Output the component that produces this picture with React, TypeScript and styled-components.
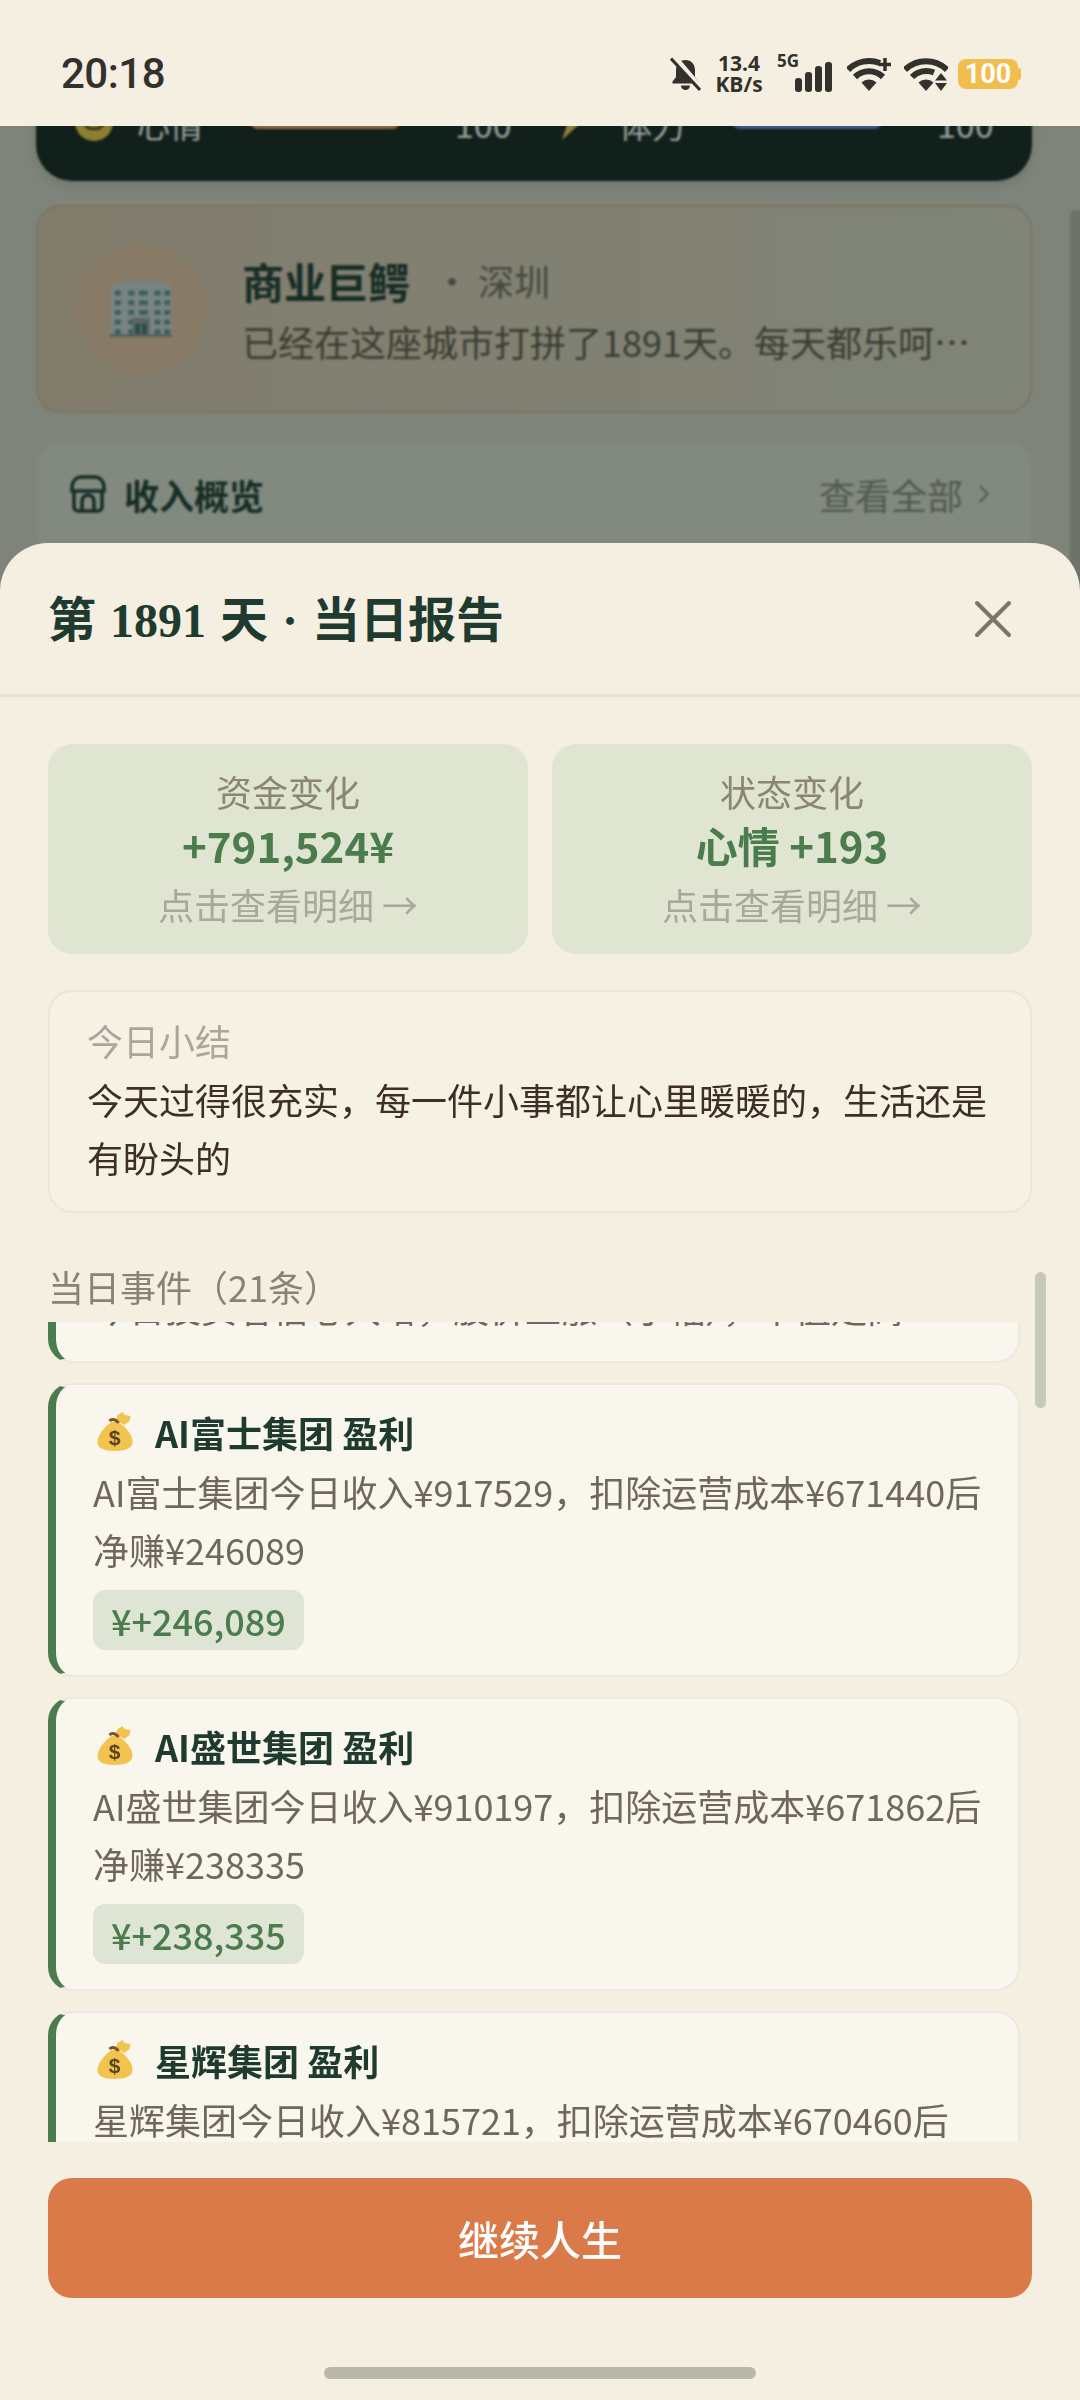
import React, { useLayoutEffect, useRef } from "react";
import styled, { createGlobalStyle } from "styled-components";
import { X, ChevronRight } from "lucide-react";

const SANS = `"Noto Sans CJK SC", "Noto Sans", sans-serif`;

const GlobalStyle = createGlobalStyle`
  html, body {
    margin: 0;
    padding: 0;
    background: #f5efe2;
  }
  * {
    box-sizing: border-box;
  }
`;

const Screen = styled.div`
  position: relative;
  width: 1080px;
  height: 2400px;
  overflow: hidden;
  background: #d7d0c5;
  font-family: ${SANS};
`;

/* ---------- status bar ---------- */

const StatusBar = styled.header`
  position: absolute;
  top: 0;
  left: 0;
  right: 0;
  z-index: 3;
  display: flex;
  justify-content: space-between;
  align-items: center;
  height: 126px;
  padding: 21px 60px 0 61px;
  background: #f5efe2;
  color: #33312c;
`;

const Clock = styled.div`
  font-family: Roboto, sans-serif;
  font-size: 42px;
  font-weight: 500;
  letter-spacing: -0.5px;
`;

const StatusIcons = styled.div`
  display: flex;
  align-items: center;
`;

const NetSpeed = styled.div`
  display: flex;
  flex-direction: column;
  align-items: center;
  width: 46px;
  margin: 0 15px 0 15px;
  font-family: "Open Sans", sans-serif;
  font-size: 21px;
  font-weight: 700;
  line-height: 21px;
`;

const SignalWrap = styled.div`
  position: relative;
  display: flex;
  justify-content: flex-end;
  align-items: flex-end;
  gap: 3px;
  width: 55px;
  height: 37px;
  margin-right: 15px;
`;

const FiveG = styled.span`
  position: absolute;
  top: -3px;
  left: 0;
  font-family: "Open Sans", sans-serif;
  font-size: 17px;
  font-weight: 700;
  line-height: 18px;
`;

const SignalBar = styled.i<{ $h: number }>`
  display: block;
  width: 7px;
  height: ${(p) => p.$h}px;
  border-radius: 3px;
  background: #33312c;
`;

const WifiGap = styled.span`
  width: 13px;
`;

const Battery = styled.div`
  position: relative;
  width: 60px;
  height: 30px;
  margin-left: 10px;
  margin-right: 2px;
  border-radius: 8px;
  background: #f2bd4f;
  color: #fff;
  font-family: Roboto, sans-serif;
  font-size: 27px;
  font-weight: 700;
  line-height: 30px;
  text-align: center;

  &::after {
    content: "";
    position: absolute;
    top: 9px;
    right: -3px;
    width: 3px;
    height: 12px;
    border-radius: 0 2px 2px 0;
    background: #f2bd4f;
  }
`;

/* ---------- page behind the sheet ---------- */

const Behind = styled.main`
  display: flex;
  flex-direction: column;
  gap: 24px;
  width: 100%;
  padding: 56px 48px 0 36px;
`;

const PageThumb = styled.div`
  position: absolute;
  top: 210px;
  right: 0;
  width: 10px;
  height: 400px;
  border-radius: 5px 0 0 5px;
  background: #b8afa6;
`;

const PlayerCard = styled.section`
  display: flex;
  align-items: center;
  height: 125px;
  padding: 27px 35px 16px 39px;
  border-radius: 36px;
  background: #121a18;
  box-shadow: 0 4px 12px rgba(0, 0, 0, 0.12);
  color: #fff;
`;

const MeterIcon = styled.span<{ $wide: number; $before: number; $after: number }>`
  display: flex;
  flex: none;
  width: ${(p) => p.$wide}px;
  margin: -4px ${(p) => p.$after}px 0 ${(p) => p.$before}px;
`;

const MeterLabel = styled.span`
  flex: none;
  width: 66px;
  font-size: 33px;
  line-height: 40px;
`;

const MeterTrack = styled.div<{ $color: string }>`
  flex: none;
  width: 150px;
  height: 26px;
  margin: -16px 0 0 47px;
  border-radius: 8px;
  background: ${(p) => p.$color};
`;

const MeterValue = styled.span`
  flex: none;
  width: 58px;
  margin-left: 55px;
  font-size: 34px;
  line-height: 40px;
`;

const ProfileCard = styled.section`
  display: flex;
  align-items: center;
  gap: 35px;
  height: 208px;
  padding: 0 38px 0 37px;
  border: 2px solid #d2b399;
  border-radius: 24px;
  background: linear-gradient(90deg, #dcc2ad, #d9d2c2);
`;

const Avatar = styled.div`
  display: flex;
  flex: none;
  justify-content: center;
  align-items: center;
  width: 132px;
  height: 132px;
  border-radius: 50%;
  background: #e6c0a4;
`;

const ProfileText = styled.div`
  flex: 1;
  min-width: 0;
  padding-right: 8px;
`;

const ProfileTop = styled.div`
  display: flex;
  align-items: center;
  height: 64px;
  padding-top: 2px;
`;

const ProfileName = styled.strong`
  font-size: 42px;
  font-weight: 700;
  color: #1a332b;
`;

const ProfileCity = styled.span`
  margin-left: 24px;
  font-size: 36px;
  color: #6f6558;
`;

const ProfileBio = styled.p`
  margin: 0;
  overflow: hidden;
  font-size: 36px;
  line-height: 60px;
  color: #5c4f3f;
  white-space: nowrap;
  text-overflow: ellipsis;
`;

const IncomeCard = styled.section`
  height: 300px;
  margin-top: 4px;
  padding: 21px 31px 0 32px;
  border: 2px solid #d5d2c7;
  border-radius: 24px;
  background: #dcd9ce;
`;

const IncomeHead = styled.div`
  display: flex;
  justify-content: space-between;
  align-items: center;
  height: 60px;
`;

const IncomeTitle = styled.div`
  display: flex;
  align-items: center;
  gap: 18px;
  font-size: 35px;
  font-weight: 700;
  color: #1a332b;
`;

const SeeAll = styled.div`
  display: flex;
  align-items: center;
  gap: 6px;
  font-size: 36px;
  color: #84847a;
`;

const Scrim = styled.div`
  position: absolute;
  inset: 0;
  z-index: 1;
  background: rgba(20, 40, 30, 0.45);
  backdrop-filter: blur(1px);
`;

/* ---------- bottom sheet ---------- */

const Sheet = styled.section`
  position: absolute;
  top: 543px;
  left: 0;
  right: 0;
  bottom: 0;
  z-index: 2;
  display: flex;
  flex-direction: column;
  border-radius: 48px 48px 0 0;
  background: #f5efe2;
`;

const SheetHead = styled.div`
  display: flex;
  flex: none;
  justify-content: space-between;
  align-items: center;
  height: 154px;
  padding: 0 55px 0 48px;
  border-bottom: 3px solid #e9e2d4;
`;

const SheetTitle = styled.h2`
  margin: 0 0 5px;
  font-family: "Liberation Serif", "Noto Sans CJK SC", serif;
  font-size: 48px;
  font-weight: 700;
  word-spacing: 2px;
  color: #1f3a2e;
`;

const CloseButton = styled.button`
  display: flex;
  padding: 0;
  border: 0;
  background: none;
  color: #7d7568;
`;

const SheetBody = styled.div`
  display: flex;
  flex: 1;
  flex-direction: column;
  min-height: 0;
  padding: 47px 48px 0;
`;

const StatGrid = styled.div`
  display: grid;
  flex: none;
  grid-template-columns: 480px 480px;
  gap: 24px;
`;

const StatCard = styled.div`
  display: flex;
  flex-direction: column;
  align-items: center;
  height: 210px;
  padding-top: 20px;
  border-radius: 24px;
  background: #e0e5d1;
`;

const StatLabel = styled.div`
  font-size: 36px;
  line-height: 54px;
  color: #8a8574;
`;

const StatValue = styled.div`
  font-size: 42px;
  font-weight: 700;
  line-height: 54px;
  color: #4a7c4e;
`;

const StatHint = styled.div`
  margin-top: 2px;
  font-size: 36px;
  line-height: 60px;
  color: #a8a798;
`;

const SummaryBox = styled.div`
  flex: none;
  height: 223px;
  margin-top: 36px;
  padding: 20px 37px 0;
  border: 2px solid #ece6d8;
  border-radius: 24px;
  background: #f6f1e5;
`;

const SummaryLabel = styled.div`
  font-size: 36px;
  line-height: 56px;
  color: #aba59a;
`;

const SummaryText = styled.p`
  margin: 2px 0 0;
  font-size: 36px;
  line-height: 58px;
  color: #3d2f22;
`;

const EventSection = styled.div`
  position: relative;
  display: flex;
  flex: 1;
  flex-direction: column;
  min-height: 0;
  margin-top: 44px;
`;

const EventHeading = styled.div`
  flex: none;
  height: 65px;
  font-size: 36px;
  line-height: 58px;
  color: #8a8272;
`;

const EventList = styled.div`
  display: flex;
  flex: 1;
  flex-direction: column;
  gap: 20px;
  width: 972px;
  min-height: 0;
  overflow: hidden;
`;

const ListThumb = styled.div`
  position: absolute;
  top: 15px;
  right: -14px;
  width: 11px;
  height: 136px;
  border-radius: 6px;
  background: #c6c8b9;
`;

const EventCard = styled.article`
  flex: none;
  padding: 24px 36px 25px 37px;
  border: 2px solid #ece8e1;
  border-left: 8px solid #4a7c4e;
  border-radius: 24px;
  background: #f9f6ee;
`;

const EventTitle = styled.div`
  display: flex;
  align-items: center;
  gap: 21px;
  padding-left: 3px;
  font-size: 36px;
  font-weight: 700;
  line-height: 46px;
  color: #1f3a2e;
`;

const EventDesc = styled.p`
  margin: 7px 0 0;
  font-size: 36px;
  line-height: 58px;
  color: #6f675c;
`;

const MoneyTag = styled.span`
  display: inline-block;
  height: 60px;
  margin-top: 12px;
  padding: 0 18px;
  border-radius: 12px;
  background: #dfe5d5;
  font-size: 36px;
  font-weight: 500;
  line-height: 60px;
  color: #4a7c4e;
`;

const SheetFoot = styled.div`
  display: flex;
  flex: none;
  flex-direction: column;
  align-items: center;
  padding: 36px 48px 21px;
`;

const ContinueButton = styled.button`
  width: 984px;
  height: 120px;
  border: 0;
  border-radius: 24px;
  background: #d97a48;
  font-family: ${SANS};
  font-size: 41px;
  font-weight: 500;
  color: #fff;
`;

const HomeIndicator = styled.div`
  width: 432px;
  height: 12px;
  margin-top: 69px;
  border-radius: 6px;
  background: #b8b7a9;
`;

/* ---------- drawn icons ---------- */

function BellOff() {
  return (
    <svg width="31" height="34" viewBox="0 0 31 34">
      <path
        d="M15.500 3c-6 0-9.500 4.500-9.500 10.500v6.500l-3.500 4.500v2h26v-2L25 20v-6.500C25 7.500 21.500 3 15.500 3z"
        fill="#33312c"
      />
      <path d="M11 28.500a4.500 4.500 0 0 0 9 0z" fill="#33312c" />
      <path d="M4 0l27 32" stroke="#f5efe2" strokeWidth="6" />
      <path d="M1 1.500l29 31.500" stroke="#33312c" strokeWidth="3" />
    </svg>
  );
}

function WifiIcon({ badge }: { badge: "plus" | "arrows" }) {
  return (
    <svg width="44" height="34" viewBox="0 0 44 34" fill="none">
      <g stroke="#33312c" strokeWidth="6">
        <path d={badge === "plus" ? "M1 12.800A30 30 0 0 1 33 6" : "M1 12.800A30 30 0 0 1 43 12.800"} />
        <path d={badge === "plus" ? "M8 20A20 20 0 0 1 36 20" : "M8 20A20 20 0 0 1 30 15.500"} />
      </g>
      <path d="M14.500 25.500a11 11 0 0 1 15 0L22 34z" fill="#33312c" />
      {badge === "plus" ? (
        <path d="M38 1v13M31.500 7.500h12.500" stroke="#33312c" strokeWidth="3.500" />
      ) : (
        <path d="M37 16l6 7.500H31zM31 26h12l-6 8z" fill="#33312c" />
      )}
    </svg>
  );
}

function SmileIcon() {
  return (
    <svg width="38" height="38" viewBox="0 0 38 38">
      <circle cx="19" cy="19" r="19" fill="#f0c63c" />
      <path d="M9 20c3 8 17 8 20 0" stroke="#4c3b14" strokeWidth="2.500" fill="none" />
    </svg>
  );
}

function BoltIcon() {
  return (
    <svg width="24" height="38" viewBox="0 0 24 36">
      <path d="M24 0L10 14h14L0 36l6-18H0z" fill="#eccb4a" />
    </svg>
  );
}

function BuildingIcon() {
  const cols = [5, 19, 30, 46, 56];
  const rows = [10, 20, 30, 40, 50];
  return (
    <svg width="62" height="58" viewBox="0 0 64 58">
      <rect x="12" y="0" width="40" height="4" fill="#c9cdd0" />
      <rect x="1" y="4" width="62" height="52" fill="#c9d0d2" />
      {rows.map((y) =>
        cols.map((x) => (
          <rect key={`${x}-${y}`} x={x} y={y} width={x === 30 ? 9 : 6} height="5" fill="#5d8a96" />
        ))
      )}
      <rect x="23" y="38" width="18" height="18" fill="#9a9a92" />
      <rect x="26" y="44" width="5" height="12" fill="#3f6a78" />
      <rect x="33" y="44" width="5" height="12" fill="#3f6a78" />
      <rect x="0" y="55" width="64" height="3" fill="#8f918c" />
    </svg>
  );
}

function StoreIcon() {
  return (
    <svg width="36" height="38" viewBox="0 0 36 38" fill="none" stroke="#1a332b" strokeWidth="3.500">
      <path d="M2 13C2 6 6 2 12 2h12c6 0 10 4 10 11v3H2z" />
      <path d="M4 16v16a4 4 0 0 0 4 4h20a4 4 0 0 0 4-4V16" />
      <path d="M12 36V26a6 6 0 0 1 12 0v10" />
    </svg>
  );
}

function MoneyBag() {
  return (
    <svg width="38" height="40" viewBox="0 0 37 40">
      <path
        d="M15 10C8 15 1 23 1 30c0 6 6 9 17 9s18-3 18-9c0-8-7-15-14-20z"
        fill="#f2c34f"
      />
      <path d="M21 3l5-3 2 3 6 1-1 5-5 4-5-3-4-1z" fill="#f2c34f" />
      <path d="M13 9c3-3 7-1 9 2" stroke="#7a5526" strokeWidth="3" fill="none" />
      <text
        x="18"
        y="33"
        textAnchor="middle"
        fontFamily="Liberation Sans"
        fontSize="21"
        fontWeight="700"
        fill="#5a4420"
      >
        $
      </text>
    </svg>
  );
}

const EVENTS = [
  { title: "AI富士集团 盈利", desc: "AI富士集团今日收入¥917529，扣除运营成本¥671440后净赚¥246089", money: "¥+246,089" },
  { title: "AI盛世集团 盈利", desc: "AI盛世集团今日收入¥910197，扣除运营成本¥671862后净赚¥238335", money: "¥+238,335" },
  { title: "星辉集团 盈利", desc: "星辉集团今日收入¥815721，扣除运营成本¥670460后净赚¥145261", money: "¥+145,261" },
];

export default function App() {
  const listRef = useRef<HTMLDivElement>(null);

  // the list in the reference is caught part way through its scroll
  useLayoutEffect(() => {
    if (listRef.current) listRef.current.scrollTop = 123;
  }, []);

  return (
    <Screen>
      <GlobalStyle />

      <Behind>
        <PlayerCard>
          <MeterIcon $wide={38} $before={0} $after={24}>
            <SmileIcon />
          </MeterIcon>
          <MeterLabel>心情</MeterLabel>
          <MeterTrack $color="#f39a5e" />
          <MeterValue>100</MeterValue>
          <MeterIcon $wide={24} $before={49} $after={33}>
            <BoltIcon />
          </MeterIcon>
          <MeterLabel>体力</MeterLabel>
          <MeterTrack $color="#6082da" />
          <MeterValue>100</MeterValue>
        </PlayerCard>

        <ProfileCard>
          <Avatar>
            <BuildingIcon />
          </Avatar>
          <ProfileText>
            <ProfileTop>
              <ProfileName>商业巨鳄</ProfileName>
              <ProfileCity>· 深圳</ProfileCity>
            </ProfileTop>
            <ProfileBio>已经在这座城市打拼了1891天。每天都乐呵呵地过日子</ProfileBio>
          </ProfileText>
        </ProfileCard>

        <IncomeCard>
          <IncomeHead>
            <IncomeTitle>
              <StoreIcon />
              收入概览
            </IncomeTitle>
            <SeeAll>
              查看全部
              <ChevronRight size={30} strokeWidth={1.5} />
            </SeeAll>
          </IncomeHead>
        </IncomeCard>
      </Behind>
      <PageThumb />
      <Scrim />

      <StatusBar>
        <Clock>20:18</Clock>
        <StatusIcons>
          <BellOff />
          <NetSpeed>
            <span>13.4</span>
            <span>KB/s</span>
          </NetSpeed>
          <SignalWrap>
            <FiveG>5G</FiveG>
            <SignalBar $h={14} />
            <SignalBar $h={20} />
            <SignalBar $h={26} />
            <SignalBar $h={30} />
          </SignalWrap>
          <WifiIcon badge="plus" />
          <WifiGap />
          <WifiIcon badge="arrows" />
          <Battery>100</Battery>
        </StatusIcons>
      </StatusBar>

      <Sheet>
        <SheetHead>
          <SheetTitle>第 1891 天 · 当日报告</SheetTitle>
          <CloseButton>
            <X size={64} strokeWidth={1.5} />
          </CloseButton>
        </SheetHead>

        <SheetBody>
          <StatGrid>
            <StatCard>
              <StatLabel>资金变化</StatLabel>
              <StatValue>+791,524¥</StatValue>
              <StatHint>点击查看明细 →</StatHint>
            </StatCard>
            <StatCard>
              <StatLabel>状态变化</StatLabel>
              <StatValue>心情 +193</StatValue>
              <StatHint>点击查看明细 →</StatHint>
            </StatCard>
          </StatGrid>

          <SummaryBox>
            <SummaryLabel>今日小结</SummaryLabel>
            <SummaryText>今天过得很充实，每一件小事都让心里暖暖的，生活还是有盼头的</SummaryText>
          </SummaryBox>

          <EventSection>
            <EventHeading>当日事件（21条）</EventHeading>
            <ListThumb />
            <EventList ref={listRef}>
              <EventCard>
                <EventTitle>
                  <MoneyBag />
                  今日投资 收益
                </EventTitle>
                <EventDesc>今日投资者信心大增，股价上涨（小幅），市值走高</EventDesc>
              </EventCard>
              {EVENTS.map((ev) => (
                <EventCard key={ev.title}>
                  <EventTitle>
                    <MoneyBag />
                    {ev.title}
                  </EventTitle>
                  <EventDesc>{ev.desc}</EventDesc>
                  <MoneyTag>{ev.money}</MoneyTag>
                </EventCard>
              ))}
            </EventList>
          </EventSection>
        </SheetBody>

        <SheetFoot>
          <ContinueButton>继续人生</ContinueButton>
          <HomeIndicator />
        </SheetFoot>
      </Sheet>
    </Screen>
  );
}
